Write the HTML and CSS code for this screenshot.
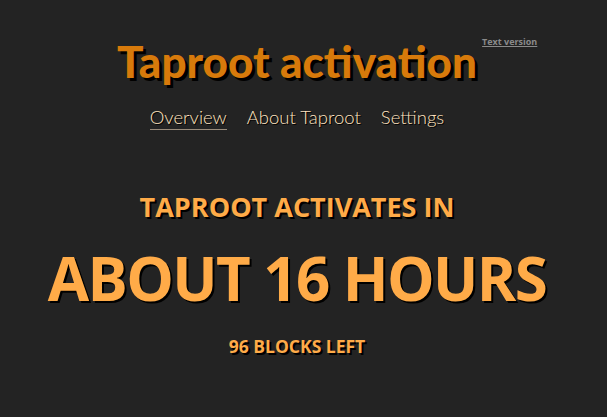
FILE: index.html
```html
<!DOCTYPE html>
<html>
<head>
<meta charset="utf-8">
<link rel="stylesheet" href="styles.css">
</head>
<body>
<header class="header">
  <div class="title-wrap">
    <h1 class="title">Taproot activation</h1>
    <a class="text-version" href="#">Text version</a>
  </div>
  <nav class="nav">
    <a class="nav-link active" href="#">Overview</a>
    <a class="nav-link" href="#">About Taproot</a>
    <a class="nav-link" href="#">Settings</a>
  </nav>
</header>
<main class="main">
  <div class="lead">TAPROOT ACTIVATES IN</div>
  <div class="big">ABOUT 16 HOURS</div>
  <div class="blocks">96 BLOCKS LEFT</div>
</main>
</body>
</html>
```
FILE: styles.css
```css
html, body {
  margin: 0;
  padding: 0;
  background: #232323;
  height: 100%;
}
body {
  font-family: "Open Sans", sans-serif;
  padding-right: 13px;
}
.header {
  display: flex;
  flex-direction: column;
  align-items: center;
  padding-top: 35px;
}
.title-wrap {
  position: relative;
}
.title {
  margin: 0;
  font-family: Lato, sans-serif;
  font-weight: 900;
  font-size: 44px;
  line-height: 52px;
  color: #d77a0b;
  text-shadow: 3px 3px 0 #000;
}
.text-version {
  position: absolute;
  left: 365px;
  top: 0;
  white-space: nowrap;
  font-family: "Open Sans", sans-serif;
  font-weight: 700;
  font-size: 9px;
  color: #8a8a8a;
  text-decoration: underline;
}
.nav {
  display: flex;
  gap: 20px;
  margin-top: 19px;
}
.nav-link {
  font-family: Lato, sans-serif;
  font-weight: 300;
  font-size: 18.5px;
  color: #ffe2bf;
  text-decoration: none;
  text-shadow: 1px 1px 0 #000;
  padding-bottom: 1px;
}
.nav-link.active {
  border-bottom: 1px solid #9a8c7c;
}
.main {
  display: flex;
  flex-direction: column;
  align-items: center;
  margin-top: 59px;
  color: #ffab48;
  font-weight: 700;
  text-shadow: 2px 2px 0 #000;
}
.lead {
  font-size: 27px;
  line-height: 36px;
}
.big {
  margin-top: 13px;
  font-size: 60px;
  line-height: 80px;
  letter-spacing: -1.6px;
}
.blocks {
  margin-top: 16px;
  font-size: 17.5px;
  line-height: 24px;
}
```
